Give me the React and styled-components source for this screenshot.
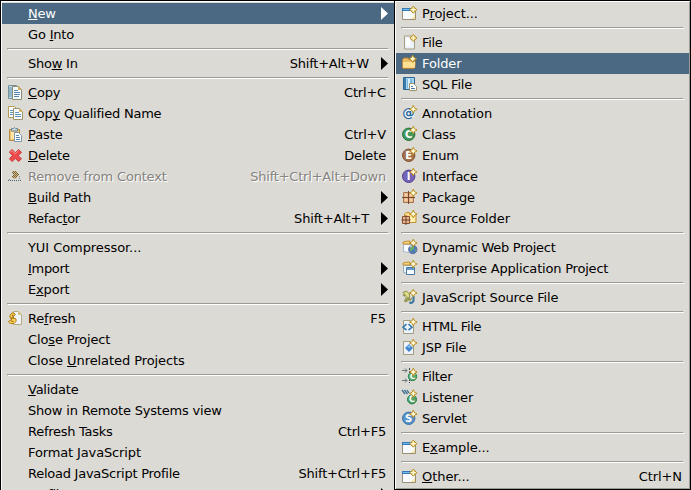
import React from "react";
import styled, { createGlobalStyle, css } from "styled-components";

const GlobalStyle = createGlobalStyle`
  * { box-sizing: border-box; }
  html, body { margin: 0; overflow: hidden; }
  body { background: #dcdad5; }
`;

const Screen = styled.main`
  display: flex;
  align-items: flex-start;
  width: 691px;
  height: 490px;
  overflow: hidden;
  background: #dcdad5;
  color: #000;
  font: 13px/21px "DejaVu Sans", sans-serif;
  cursor: default;
`;

const MainMenu = styled.nav`
  flex: 0 0 394px;
  height: 490px;
  overflow: hidden;
  border-top: 1px solid #000;
  border-left: 1px solid #000;
  box-shadow: inset 1px 1px 0 #fff;
  padding: 2px 0 0 1px;
`;

const SubMenu = styled.nav`
  flex: 0 0 297px;
  height: 490px;
  border: 1px solid #000;
  box-shadow: inset 1px 1px 0 #fff, inset -1px -1px 0 #9c9a94;
  padding: 2px 1px 1px;
`;

const Row = styled.div`
  display: flex;
  align-items: center;
  height: 21px;
  padding: 0 6px;
  white-space: pre;
  ${(p) => p.$selected && css`
    background: #4b6983;
    color: #fff;
  `}
  ${(p) => p.$disabled && css`
    color: #85837f;
    text-shadow: 1px 1px 0 #fff;
  `}
`;

const IconSlot = styled.span`
  flex: 0 0 20px;
  height: 17px;
  svg { display: block; overflow: visible; }
`;

const Label = styled.span`
  flex: 1;
  letter-spacing: ${(p) => p.$tracking || 0}px;
`;

const Mnemonic = styled.span`
  text-decoration: underline 1px;
  text-decoration-skip-ink: none;
  text-underline-offset: 1px;
`;

const Shortcut = styled.span`
  margin-right: ${(p) => (p.$sub ? "1px" : "2px")};
  letter-spacing: ${(p) => p.$tracking || 0}px;
`;

const ArrowSlot = styled.span`
  flex: 0 0 ${(p) => (p.$wide ? "17px" : "0")};
  display: flex;
  justify-content: flex-end;
  svg { display: block; }
`;

const Separator = styled.div`
  height: 2px;
  margin: 3px 5px;
  border-top: 1px solid #9c9a94;
  border-left: 1px solid #9c9a94;
  border-right: 1px solid #fff;
  border-bottom: 1px solid #fff;
`;

const Star = ({ x = 11.5, y = 4 }) => (
  <g transform={`translate(${x} ${y})`}>
    <path d="M0-3.8 1.2-1.2 3.8 0 1.2 1.2 0 3.8-1.2 1.2-3.8 0-1.2-1.2Z" fill="#fff3bd" stroke="#b88b1d" />
    <path d="M0-2V2M-2 0H2" stroke="#fffbe2" />
  </g>
);

const Diamond = ({ x, y }) => (
  <g transform={`translate(${x} ${y})`}>
    <path d="M0-3.5 3.5 0 0 3.5-3.5 0Z" fill="#e3c25f" stroke="#b08620" />
    <path d="M0-2.5V2.5M-2.5 0H2.5" stroke="#fff9d8" strokeWidth="1.2" />
  </g>
);

const Disc = ({ color, rim, letter, x = 6.7, y = 8.3, r = 6.2, size = 10 }) => (
  <>
    <circle cx={x} cy={y} r={r} fill={color} stroke={rim} />
    <text x={x} y={y + size * 0.36} textAnchor="middle" fill="#fff" fontFamily="DejaVu Sans, sans-serif" fontWeight="700" fontSize={size}>{letter}</text>
  </>
);

const Page = ({ x = 2, y = 3 }) => (
  <path d={`M${x + 0.5} ${y - 0.5}h7l3 3v10h-10z`} fill="#edf3fc" stroke="#a59d80" />
);

const WindowIcon = () => (
  <>
    <path d="M.5 3.5h13v11H.5z" fill="#f8fbff" stroke="#998e72" />
    <path d="M8 14q5-2 5-7v7Z" fill="#f6e7a9" />
    <path d="M0 3h14v3H0z" fill="#3679b4" />
    <path d="M1 4h8v1H1z" fill="#73bde9" />
    <Diamond x={11.3} y={4.7} />
  </>
);

const icons = {
  window: <WindowIcon />,
  file: <><Page x={2} y={2.5} /><path d="M4 4h4v8H4z" fill="#fff" /><Diamond x={11.3} y={4} /></>,
  folder: (
    <>
      <path d="M.5 12V4.5L2 3h4l1.5 2H13v7l-1 1.5H1Z" fill="#e8bd65" stroke="#b88037" />
      <path d="M.8 7h12.5l-.5 5.7H1Z" fill="#ffdf93" />
      <Star x={10.7} y={3.8} />
    </>
  ),
  sql: (
    <>
      <path d="M1.5 1.5h11v12h-11z" fill="#a9d4ef" stroke="#2e6795" />
      <path d="M2 2h2v11H2z" fill="#397dae" />
      <path d="M5 3h5v9H5z" fill="#7bb8dd" />
      <path d="M6 3h2v9H6z" fill="#dcf2fb" />
      <path d="M7.5 7.5h4l3 3v4h-7z" fill="#fff" stroke="#9d966a" />
      <path d="M9 10.5h2m-2 2h4" stroke="#477ca6" />
    </>
  ),
  annotation: (
    <>
      <circle cx="6.7" cy="8.5" r="6" fill="#e8f1f8" />
      <text x="6.6" y="12" textAnchor="middle" fill="#2c6699" fontFamily="DejaVu Sans, sans-serif" fontWeight="700" fontSize="12.5">@</text>
      <Star x={11.3} y={4.3} />
    </>
  ),
  class: <><Disc color="#44975b" rim="#25733d" letter="C" /><Star x={11.3} y={4} /></>,
  enum: <><Disc color="#a5714a" rim="#805030" letter="E" /><Star x={11.3} y={4} /></>,
  interface: <><Disc color="#7563b5" rim="#513d96" letter="I" /><Star x={11.3} y={4} /></>,
  package: (
    <>
      <path d="M1.5 3.5h10v10h-10z" fill="#e5b78b" stroke="#aa7451" />
      <path d="M6.5 2v13M0 8.5h13" stroke="#754530" />
      <path d="M3 5h2v2H3zm5 0h2v2H8zM3 10h2v2H3zm5 0h2v2H8z" fill="#f4d4ad" />
      <Star x={11.3} y={4} />
    </>
  ),
  sourceFolder: (
    <>
      <path d="M2.5 12V4l2-1.5h3l1 2h5.5v8H3Z" fill="#ffdc83" stroke="#c19039" />
      <path d="M5 7h8v5H6z" fill="#fff0b2" />
      <path d="M.5 6.5h7v7h-7z" fill="#e7b78d" stroke="#895036" />
      <path d="M4 5v10M-.5 10h9" stroke="#70412e" />
      <Star x={11.3} y={4} />
    </>
  ),
  dynamic: (
    <>
      <path d="M1.5 5.5h10v7q-5 2-10 0z" fill="#f9fcff" stroke="#a5b5c8" />
      <path d="M1 5V3q3-1 7-1v3Z" fill="#f6d27a" stroke="#c2943b" />
      <circle cx="10.8" cy="10.5" r="4.2" fill="#4b7db8" stroke="#6b6d9c" />
      <path d="m8 9 2-2 2 1v2l-2 1v2l-2-2Zm5 1 1.5 1-1.5 2Z" fill="#65ad6c" />
      <path d="m8 8 2-1" stroke="#d1ebf7" />
      <Star x={11.3} y={4} />
    </>
  ),
  enterprise: (
    <>
      <path d="M1.5 5.5h10v7q-5 2-10 0z" fill="#edf5fa" stroke="#94abc1" />
      <path d="M1 5V3q3-1 7-1v3Z" fill="#f6d27a" stroke="#c2943b" />
      <path d="M4.5 7.5h8v7h-8z" fill="#f7fbff" stroke="#477ba9" />
      <path d="M5 8h7v2H5z" fill="#619bc6" />
      <Star x={11.3} y={4} />
    </>
  ),
  javascript: (
    <>
      <path d="M1 3.5 4.5 2l3 3v4L6 12H2.5l2-4Z" fill="#dedc8b" stroke="#8c9148" />
      <path d="m1 6 2 1m0 6 3-4 2 2 2-2" stroke="#939451" strokeWidth="1.5" fill="none" />
      <path d="M11.5 7v5q-1 2-3 2l-1-1" fill="none" stroke="#3c759d" strokeWidth="2" />
      <Star x={11.3} y={4} />
    </>
  ),
  html: <><Page x={1} y={3} /><path d="M4.5 6 1 9.3 4.5 12M6.5 6 10 9.3 6.5 12" fill="none" stroke="#387dae" strokeWidth="1.6" /><Star x={11.3} y={4} /></>,
  jsp: <><Page x={1} y={3} /><path d="m7 5 4 4-4 4-4-4Z" fill="#3f83cc" /><path d="m7 6 2 2-2 1-2-1Z" fill="#8dbee9" /><Star x={11.3} y={4} /></>,
  filter: (
    <>
      <path d="M0 2.5h5m-2-2 2 2-2 2M0 12.5h5m-2-2 2 2-2 2" stroke="#66757c" fill="none" />
      <path d="M7.5 0v5m0 6v4" stroke="#394753" strokeDasharray="2 1" />
      <Disc color="#5bac6d" rim="#31854b" letter="C" x={10.5} y={8.5} r={4.2} size={7.5} />
      <Star x={11.3} y={4} />
    </>
  ),
  listener: (
    <>
      <path d="m0 1 3 4m-.5-4 3 4M5 1l2 3" stroke="#3e6f96" strokeWidth="1.3" />
      <Disc color="#53a466" rim="#2c7d46" letter="C" x={10} y={10.4} r={4.5} size={8} />
      <Star x={11.3} y={4.5} />
    </>
  ),
  servlet: <><Disc color="#5793c7" rim="#3d72aa" letter="S" /><Star x={11.3} y={4} /></>,
  copy: (
    <>
      <path d="M.5 1.5h8v13h-8z" fill="#bddbea" stroke="#74919a" />
      <path d="M1 4h3M1 6h3M1 8h3M1 10h3M1 12h3" stroke="#668fa8" />
      <path d="M4.5 2.5h6l3 3v10h-9z" fill="#f7fbff" stroke="#8b8b72" />
      <path d="M10 2v4h4Z" fill="#d4b05d" />
      <path d="M6 6.5h4m-4 2h6m-6 2h6m-6 2h5" stroke="#5c87ac" />
    </>
  ),
  copyName: (
    <>
      <path d="M.5 1.5h6l3 3v8h-9z" fill="#f7fbff" stroke="#b39b56" />
      <path d="M2 5.5h4m-4 2h4m-4 2h4" stroke="#6594ba" />
      <path d="M5.5 3.5h6l3 3v8h-9z" fill="#f7fbff" stroke="#a09367" />
      <path d="M11 3v4h4Z" fill="#d8b965" />
      <path d="M7 7.5h4m-4 2h6m-6 2h6" stroke="#6594ba" />
    </>
  ),
  paste: (
    <g transform="translate(0 1)">
      <path d="M1.5 2.5h10v11h-10z" fill="#efc36c" stroke="#b38b43" />
      <path d="M3 5h3v7H3z" fill="#ffe5a7" />
      <path d="M3.5 3V1.5h2l1-1 1 1h2V4h-6z" fill="#c8d6dd" stroke="#6e8794" />
      <path d="M6.5 5.5h4l3 3v6h-7z" fill="#f8fbff" stroke="#7f97a9" />
      <path d="M8 8.5h3m-3 2h4m-4 2h4" stroke="#5c8ab1" />
    </g>
  ),
  delete: (
    <g transform="translate(0 1)">
      <path d="m1.3 4.1 2.7-2.6 3.3 3.2 3.3-3.2 2.9 2.8-3.3 3.4 3.3 3.1-2.9 2.7-3.3-3-3.3 3-2.6-2.8 3.1-3.1Z" fill="#ed4b4b" stroke="#d03a40" />
      <path d="m2.5 4.1 1.6-1.4 3.1 3.1 3.3-3.1" fill="none" stroke="#fa9288" />
    </g>
  ),
  remove: (
    <>
      <path d="M5 3h3l2 3-1 4-3 1-2-2 2-2-2-2z" fill="#cdbb8e" />
      <path d="M5.5 3v1m2-1v1m-3 0v1m2-1v1m2-1v1m-3 0v1m2-1v1m2-1v1m-3 0v1m2-1v1m2-1v1m-5 0v1m2-1v1m2-1v1m-5 0v1m2-1v1m2-1v1m-3 0v1m2-1v1" stroke="#7c6433" />
      <path d="M1 11.5h1m9-1h1m-1-2h1" stroke="#7d8591" />
      <path d="M0 12.5h14" stroke="#526077" strokeDasharray="1 1" />
    </>
  ),
  refresh: (
    <>
      <path d="M5.5 1.5h5l3 3v10h-8z" fill="#edf4fd" stroke="#b5aa83" />
      <path d="M10 1v4h4Z" fill="#dbc47c" />
      <path d="M2 7.5V5l2-2h2l1.5 1.5L6 6H4.5L6 8.2H3Zm6 1.5v2.5l-2 2H2.5L.5 12 2 10.2h2L2.7 8H6Z" fill="#fbd462" stroke="#b07a12" />
      <path d="M4 5.2h1.5M3.5 11.5H5.5" stroke="#8e610b" />
    </>
  ),
};

const separator = { separator: true };

const mainItems = [
  { text: "&New", tracking: -0.2, arrow: true, selected: true },
  { text: "Go &Into", tracking: -0.18 },
  separator,
  { text: "Sho&w In", tracking: -0.24, shortcut: "Shift+Alt+W", keyTracking: -0.23, arrow: true },
  separator,
  { text: "&Copy", tracking: -0.2, icon: "copy", shortcut: "Ctrl+C", keyTracking: -0.2 },
  { text: "Cop&y Qualified Name", tracking: -0.23, icon: "copyName" },
  { text: "&Paste", tracking: -0.1, icon: "paste", shortcut: "Ctrl+V", keyTracking: -0.2 },
  { text: "&Delete", tracking: -0.15, icon: "delete", shortcut: "Delete", keyTracking: -0.15 },
  { text: "Remove from Context", tracking: -0.19, icon: "remove", shortcut: "Shift+Ctrl+Alt+Down", keyTracking: -0.21, disabled: true },
  { text: "&Build Path", tracking: -0.24, arrow: true },
  { text: "Refac&tor", tracking: -0.34, shortcut: "Shift+Alt+T", keyTracking: -0.18, arrow: true },
  separator,
  { text: "YUI Compressor...", tracking: -0.07 },
  { text: "&Import", tracking: -0.3, arrow: true },
  { text: "E&xport", tracking: -0.17, arrow: true },
  separator,
  { text: "Re&fresh", tracking: -0.22, icon: "refresh", shortcut: "F5" },
  { text: "Clo&se Project", tracking: -0.14 },
  { text: "Close &Unrelated Projects", tracking: -0.08 },
  separator,
  { text: "&Validate", tracking: -0.25 },
  { text: "Show in Remote Systems view", tracking: -0.19 },
  { text: "Refresh Tasks", tracking: -0.27, shortcut: "Ctrl+F5", keyTracking: -0.25 },
  { text: "Format JavaScript", tracking: -0.13 },
  { text: "Reload JavaScript Profile", tracking: -0.25, shortcut: "Shift+Ctrl+F5", keyTracking: -0.21 },
  { text: "&Profile As", tracking: -0.2, arrow: true },
];

const newItems = [
  { text: "P&roject...", tracking: -0.12, icon: "window" },
  separator,
  { text: "File", tracking: -0.3, icon: "file" },
  { text: "Folder", tracking: -0.12, icon: "folder", selected: true },
  { text: "SQL File", tracking: -0.2, icon: "sql" },
  separator,
  { text: "Annotation", tracking: -0.13, icon: "annotation" },
  { text: "Class", tracking: -0.1, icon: "class" },
  { text: "Enum", tracking: -0.15, icon: "enum" },
  { text: "Interface", tracking: -0.28, icon: "interface" },
  { text: "Package", tracking: -0.15, icon: "package" },
  { text: "Source Folder", tracking: -0.08, icon: "sourceFolder" },
  separator,
  { text: "Dynamic Web Project", tracking: -0.26, icon: "dynamic" },
  { text: "Enterprise Application Project", tracking: -0.2, icon: "enterprise" },
  separator,
  { text: "JavaScript Source File", tracking: -0.16, icon: "javascript" },
  separator,
  { text: "HTML File", tracking: -0.32, icon: "html" },
  { text: "JSP File", tracking: -0.2, icon: "jsp" },
  separator,
  { text: "Filter", tracking: -0.32, icon: "filter" },
  { text: "Listener", tracking: -0.15, icon: "listener" },
  { text: "Servlet", tracking: -0.2, icon: "servlet" },
  separator,
  { text: "E&xample...", tracking: -0.13, icon: "window" },
  separator,
  { text: "&Other...", tracking: -0.06, icon: "window", shortcut: "Ctrl+N", keyTracking: -0.1 },
];

function MenuText({ text, tracking }) {
  const i = text.indexOf("&");
  if (i < 0) return <Label $tracking={tracking}>{text}</Label>;
  return <Label $tracking={tracking}>{text.slice(0, i)}<Mnemonic>{text[i + 1]}</Mnemonic>{text.slice(i + 2)}</Label>;
}

function MenuItems({ items, sub }) {
  return items.map((item, index) => item.separator ? <Separator key={index} role="separator" /> : (
    <Row key={index} $selected={item.selected} $disabled={item.disabled}>
      <IconSlot>{item.icon && <svg width="16" height="16" viewBox="0 0 16 16">{icons[item.icon]}</svg>}</IconSlot>
      <MenuText text={item.text} tracking={item.tracking} />
      {item.shortcut && <Shortcut $sub={sub} $tracking={item.keyTracking}>{item.shortcut}</Shortcut>}
      {item.arrow && <ArrowSlot $wide={Boolean(item.shortcut)}><svg width="7" height="13" viewBox="0 0 7 13"><path d="M0 0 7 6.5 0 13Z" fill="currentColor" /></svg></ArrowSlot>}
    </Row>
  ));
}

export default function App() {
  return (
    <>
      <GlobalStyle />
      <Screen>
        <MainMenu aria-label="Context menu"><MenuItems items={mainItems} /></MainMenu>
        <SubMenu aria-label="New submenu"><MenuItems items={newItems} sub /></SubMenu>
      </Screen>
    </>
  );
}
